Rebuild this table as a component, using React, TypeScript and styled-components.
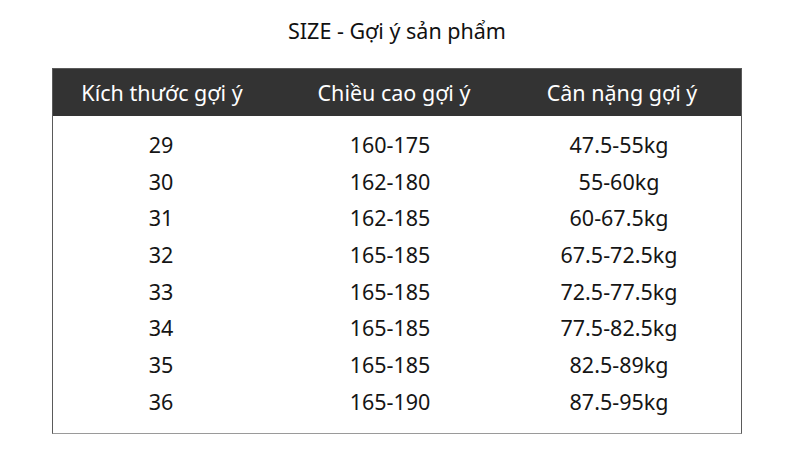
import React from 'react';
import styled, { createGlobalStyle } from 'styled-components';

const GlobalStyle = createGlobalStyle`
  html, body {
    margin: 0;
    padding: 0;
    background: #ffffff;
  }
  body {
    font-family: "Noto Sans", "Open Sans", sans-serif;
    color: #111111;
  }
`;

const Page = styled.div`
  width: 790px;
  height: 476px;
  box-sizing: border-box;
  padding: 15px 48px 0 52px;
  display: flex;
  flex-direction: column;
`;

const Title = styled.h1`
  margin: 0 0 17px;
  height: 36px;
  line-height: 32px;
  text-align: center;
  font-size: 21.5px;
  font-weight: 400;
  color: #111111;
`;

const Table = styled.div`
  width: 690px;
  height: 366px;
  box-sizing: border-box;
  border: 1px solid #5a5a5a;
  border-bottom-color: #9a9a9a;
  display: flex;
  flex-direction: column;
`;

const HeaderRow = styled.div`
  height: 47px;
  background: #333333;
  display: grid;
  grid-template-columns: 230px 230px 1fr;
  align-items: center;
  color: #ffffff;
  font-size: 21.5px;
`;

const Body = styled.div`
  padding-top: 10px;
  display: flex;
  flex-direction: column;
`;

const Row = styled.div`
  height: 36.7px;
  display: grid;
  grid-template-columns: 230px 230px 1fr;
  align-items: center;
  font-size: 21.5px;
  color: #151515;
`;

const Cell = styled.div<{ $shift?: number }>`
  text-align: center;
  transform: translateX(${(p) => p.$shift ?? 0}px);
  white-space: nowrap;
`;

const rows = [
  ['29', '160-175', '47.5-55kg'],
  ['30', '162-180', '55-60kg'],
  ['31', '162-185', '60-67.5kg'],
  ['32', '165-185', '67.5-72.5kg'],
  ['33', '165-185', '72.5-77.5kg'],
  ['34', '165-185', '77.5-82.5kg'],
  ['35', '165-185', '82.5-89kg'],
  ['36', '165-190', '87.5-95kg'],
];

const headShifts = [-6, -4, -5];
const bodyShifts = [-7, -8, -8];

const App: React.FC = () => (
  <>
    <GlobalStyle />
    <Page>
      <Title>SIZE - Gợi ý sản phẩm</Title>
      <Table>
        <HeaderRow>
          <Cell $shift={headShifts[0]}>Kích thước gợi ý</Cell>
          <Cell $shift={headShifts[1]}>Chiều cao gợi ý</Cell>
          <Cell $shift={headShifts[2]}>Cân nặng gợi ý</Cell>
        </HeaderRow>
        <Body>
          {rows.map((r) => (
            <Row key={r[0]}>
              {r.map((v, i) => (
                <Cell key={i} $shift={bodyShifts[i]}>
                  {v}
                </Cell>
              ))}
            </Row>
          ))}
        </Body>
      </Table>
    </Page>
  </>
);

export default App;
